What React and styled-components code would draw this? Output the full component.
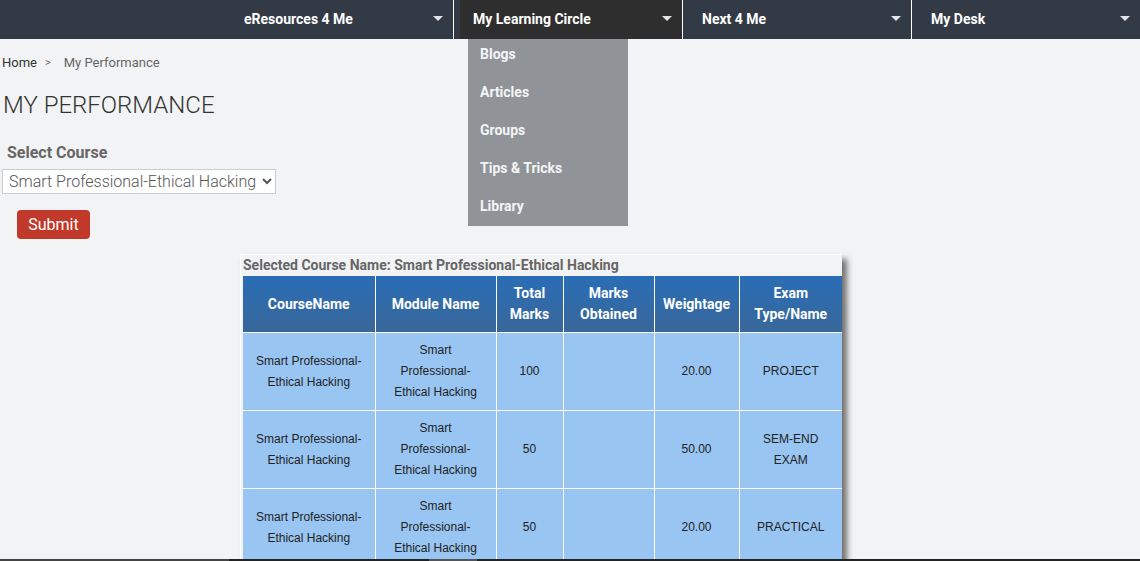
import React from "react";
import styled, { createGlobalStyle } from "styled-components";

const Global = createGlobalStyle`
  html, body { margin: 0; padding: 0; background: #f2f3f4; }
  body { font-family: Roboto, "Liberation Sans", Arial, sans-serif; overflow: hidden; }
  * { box-sizing: border-box; }
`;

const Page = styled.div`
  min-height: 561px;
`;

const Nav = styled.nav`
  display: flex;
  height: 39px;
  background: #323a46;
  padding-left: 225px;
`;

const NavItem = styled.div`
  position: relative;
  flex: ${p => (p.$last ? "1 1 auto" : "0 0 229px")};
  border-right: ${p => (p.$last ? "none" : "1px solid #ffffff")};
  display: flex;
  align-items: center;
  padding: 0 0 1px 19px;
  color: #ffffff;
  font-weight: 700;
  font-size: 14px;
  background: ${p => (p.$active ? "#2e2e2e" : "transparent")};
  box-shadow: ${p => (p.$active ? "inset 6px 0 0 #323a46" : "none")};
`;

const Caret = styled.span`
  position: absolute;
  right: 10px;
  top: 16px;
  width: 0;
  height: 0;
  border-left: 5px solid transparent;
  border-right: 5px solid transparent;
  border-top: 5px solid #e2e4e6;
`;

const Dropdown = styled.div`
  position: absolute;
  top: 39px;
  left: 14px;
  width: 160px;
  height: 187px;
  background: #909499;
  z-index: 5;
`;

const DropItem = styled.div`
  height: 38px;
  line-height: 30px;
  padding-left: 12px;
  color: #f4f5f6;
  font-size: 14px;
  font-weight: 700;
`;

const Content = styled.main`
  padding: 14px 0 0 2px;
`;

const Crumbs = styled.div`
  display: flex;
  align-items: center;
  font-size: 13px;
  line-height: 20px;
  color: #333;
`;

const CrumbSep = styled.span`
  margin: 0 13px 0 8px;
  color: #666;
  font-size: 11px;
`;

const CrumbCurrent = styled.span`
  color: #666;
`;

const Title = styled.h1`
  margin: 17px 0 0 1px;
  font-size: 24px;
  font-weight: 300;
  line-height: 30px;
  color: #333;
`;

const Label = styled.div`
  margin: 23px 0 0 5px;
  font-size: 16px;
  font-weight: 700;
  line-height: 20px;
  color: #666;
`;

const Select = styled.select`
  display: block;
  margin-top: 6px;
  width: 274px;
  height: 25px;
  border: 1px solid #ccc;
  border-radius: 0;
  background: #fff;
  font-family: Roboto, sans-serif;
  font-size: 16px;
  font-weight: 300;
  color: #555;
  padding: 0 0 0 2px;
`;

const SubmitButton = styled.button`
  display: block;
  margin: 16px 0 0 15px;
  width: 73px;
  height: 29px;
  border: none;
  border-radius: 4px;
  background: #c0392b;
  color: #fff;
  font-family: Roboto, sans-serif;
  font-size: 16px;
  padding: 0;
`;

const Card = styled.section`
  margin: 15px 0 0 238px;
  width: 602px;
  border-top: 1px solid #fff;
  border-left: 1px solid #fff;
  padding: 1px 0 0 2px;
  box-shadow: 5px 5px 6px #6f6f6f;
`;

const Caption = styled.div`
  font-size: 14px;
  font-weight: 700;
  line-height: 18px;
  color: #666;
  margin-bottom: 2px;
`;

const Table = styled.table`
  border-collapse: collapse;
  table-layout: fixed;
  width: 599px;
`;

const Th = styled.th`
  background: linear-gradient(#2a6db6, #38679a);
  color: #fff;
  font-size: 14px;
  font-weight: 700;
  line-height: 21px;
  padding: 7px 5px;
  height: 56px;
  border: 1px solid #fff;
  border-top: none;
  text-align: center;
  &:first-child { border-left: none; }
  &:last-child { border-right: none; }
`;

const Td = styled.td`
  background: #99c5f2;
  color: #222;
  font-family: "Liberation Sans", Arial, sans-serif;
  font-size: 12px;
  line-height: 21px;
  padding: 7px 10px;
  height: 78px;
  border: 1px solid #fff;
  text-align: center;
  &:first-child { border-left: none; }
  &:last-child { border-right: none; }
`;

const BottomStrip = styled.div`
  position: fixed;
  left: 0;
  right: 0;
  bottom: 0;
  height: 2px;
  display: flex;
  z-index: 10;
`;

const StripPart = styled.div`
  flex: ${p => (p.$w ? `0 0 ${p.$w}px` : "1 1 auto")};
  background: ${p => p.$c};
`;

const navItems = [
  { label: "eResources 4 Me" },
  { label: "My Learning Circle", active: true },
  { label: "Next 4 Me" },
  { label: "My Desk", last: true },
];

const dropItems = ["Blogs", "Articles", "Groups", "Tips & Tricks", "Library"];

const rows = [
  { total: "100", weight: "20.00", exam: "PROJECT" },
  { total: "50", weight: "50.00", exam: "SEM-END EXAM" },
  { total: "50", weight: "20.00", exam: "PRACTICAL" },
];

export default function App() {
  return (
    <Page>
      <Global />
      <Nav>
        {navItems.map(item => (
          <NavItem key={item.label} $active={item.active} $last={item.last}>
            {item.label}
            <Caret />
            {item.active && (
              <Dropdown>
                {dropItems.map(d => (
                  <DropItem key={d}>{d}</DropItem>
                ))}
              </Dropdown>
            )}
          </NavItem>
        ))}
      </Nav>
      <Content>
        <Crumbs>
          <span>Home</span>
          <CrumbSep>&gt;</CrumbSep>
          <CrumbCurrent>My Performance</CrumbCurrent>
        </Crumbs>
        <Title>MY PERFORMANCE</Title>
        <Label>Select Course</Label>
        <Select defaultValue="eh">
          <option value="eh">Smart Professional-Ethical Hacking</option>
        </Select>
        <SubmitButton>Submit</SubmitButton>
        <Card>
          <Caption>Selected Course Name: Smart Professional-Ethical Hacking</Caption>
          <Table>
            <colgroup>
              <col style={{ width: 132 }} />
              <col style={{ width: 121 }} />
              <col style={{ width: 67 }} />
              <col style={{ width: 91 }} />
              <col style={{ width: 85 }} />
              <col style={{ width: 103 }} />
            </colgroup>
            <thead>
              <tr>
                <Th>CourseName</Th>
                <Th>Module Name</Th>
                <Th>Total Marks</Th>
                <Th>Marks Obtained</Th>
                <Th>Weightage</Th>
                <Th>Exam Type/Name</Th>
              </tr>
            </thead>
            <tbody>
              {rows.map((r, i) => (
                <tr key={i}>
                  <Td>Smart Professional-Ethical Hacking</Td>
                  <Td>Smart Professional-Ethical Hacking</Td>
                  <Td>{r.total}</Td>
                  <Td></Td>
                  <Td>{r.weight}</Td>
                  <Td>{r.exam}</Td>
                </tr>
              ))}
            </tbody>
          </Table>
        </Card>
      </Content>
      <BottomStrip>
        <StripPart $w={229} $c="#444" />
        <StripPart $w={200} $c="#222" />
        <StripPart $w={48} $c="#555" />
        <StripPart $c="#222" />
      </BottomStrip>
    </Page>
  );
}
